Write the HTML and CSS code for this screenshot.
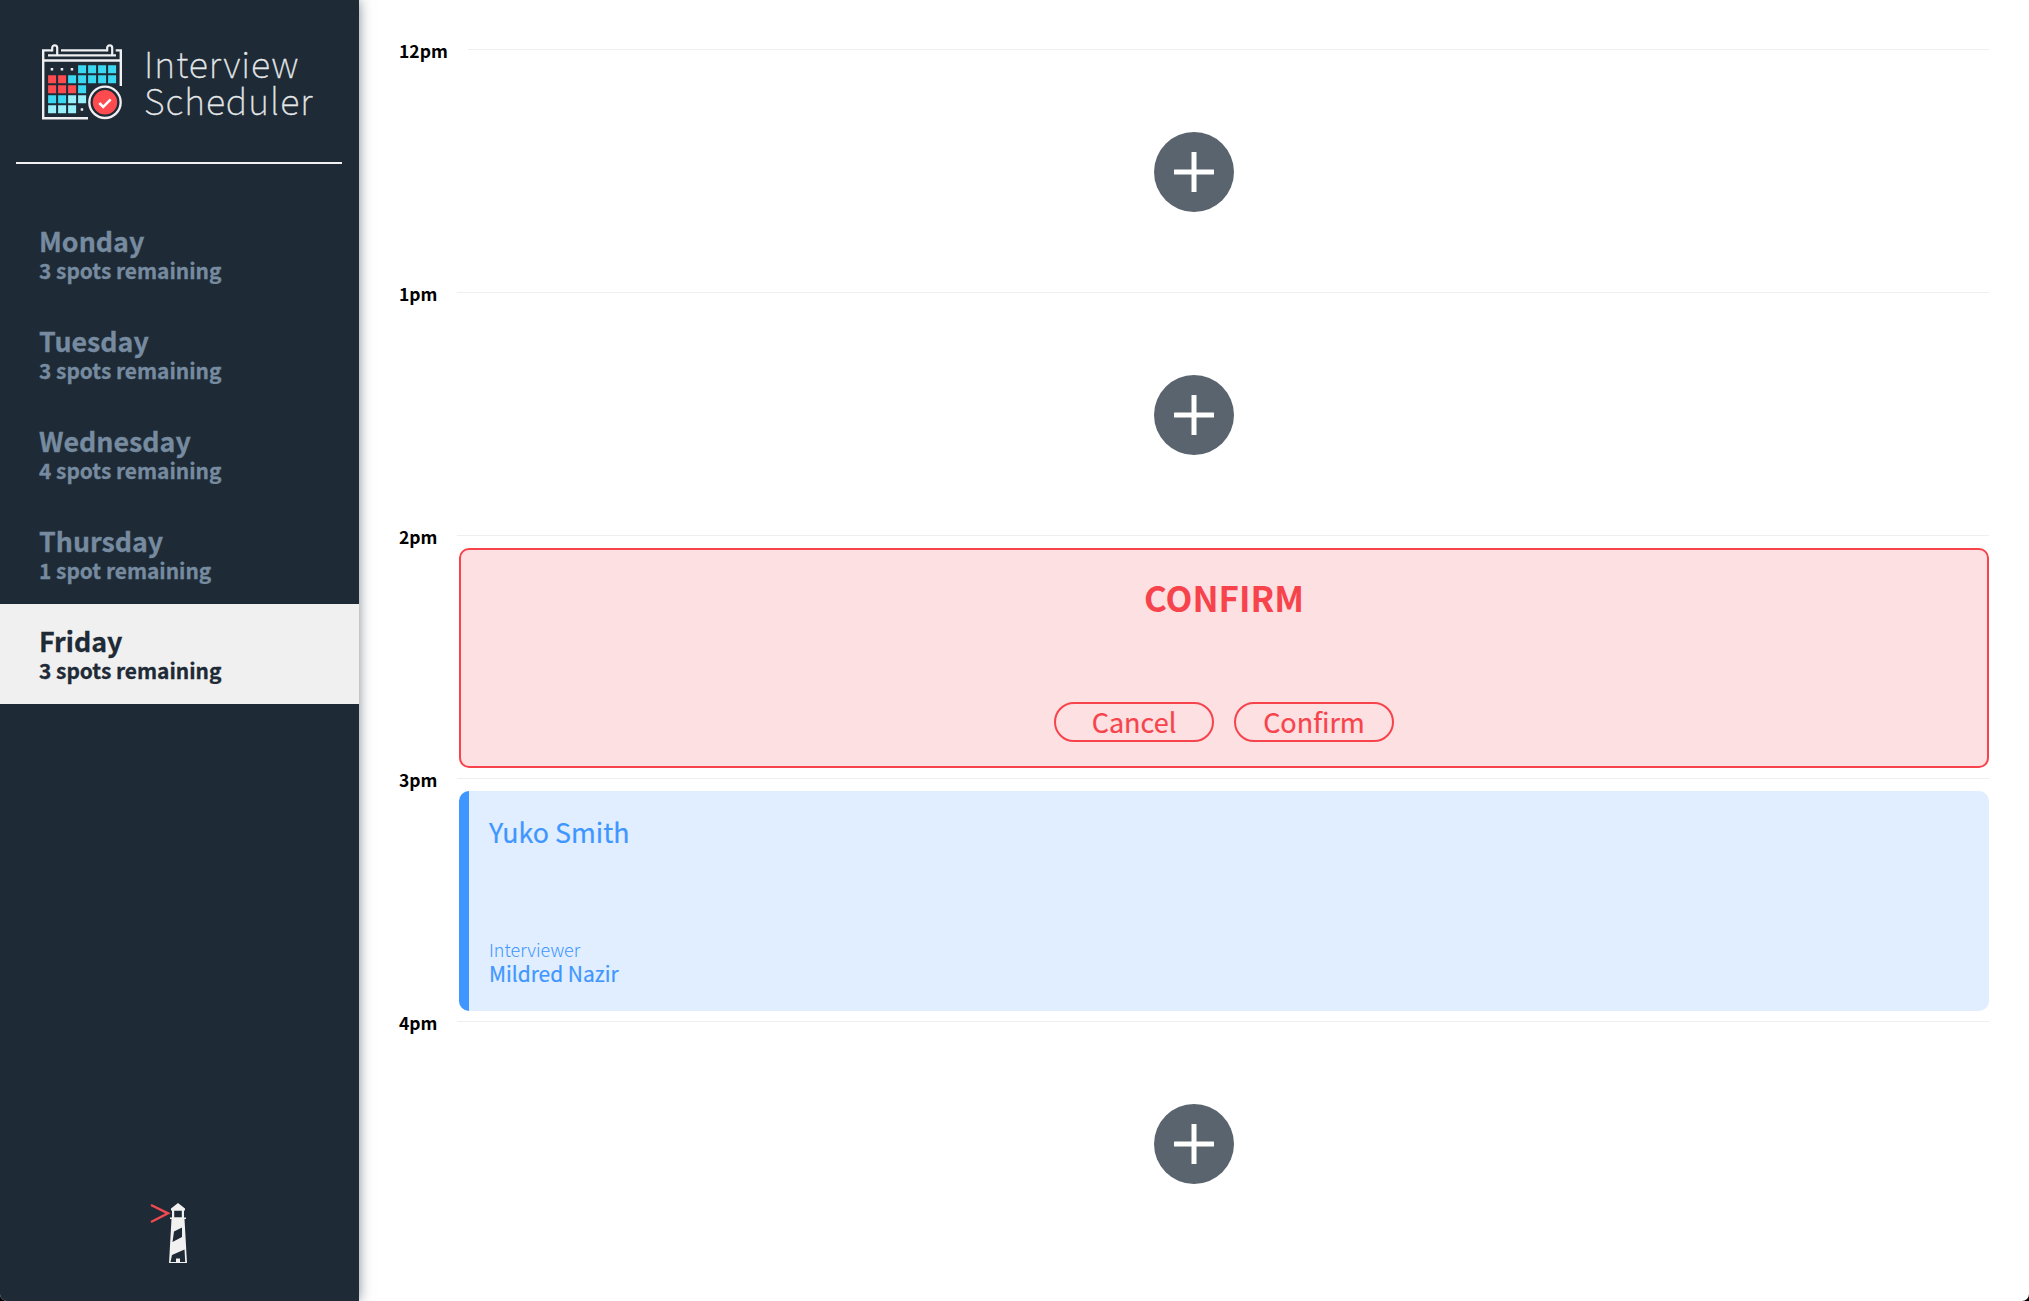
FILE: index.html
```html
<!DOCTYPE html>
<html lang="en">
<head>
<meta charset="utf-8">
<title>Interview Scheduler</title>
<link rel="stylesheet" href="styles.css">
</head>
<body>
<svg width="0" height="0" class="defs" aria-hidden="true">
  <symbol id="add" viewBox="0 0 80 80"><circle cx="40" cy="40" r="40" fill="#5a646e"/><rect x="20" y="37.5" width="40" height="5" rx=".6" fill="#fff"/><rect x="37.5" y="20" width="5" height="40" rx=".6" fill="#fff"/></symbol>
</svg>
<main class="layout">
  <aside class="sidebar">
    <div class="brand">
      <svg class="calendar" viewBox="0 0 82 78" width="82" height="78" aria-hidden="true">
        <g fill="none" stroke="#f0f0f2" stroke-width="2.400">
          <path d="M47 75.300H2.200V7.400h9M20 7.400h45.700M74.700 7.400h5.100V43M7 12.400h68M3 17.500h76" />
          <path stroke-width="2.200" d="M11.200 8.500V4.800a2.500 2.500 0 0 1 5 0V12M66.200 8.500V4.800a2.500 2.500 0 0 1 5 0V12"/>
        </g>
        <path fill="#f0f0f2" d="M9.700 25h2.500v2.500H9.700zM19.700 25h2.500v2.500h-2.500zM29.700 25h2.500v2.500h-2.500zM39.700 65.200h2.500v2.500h-2.500z"/>
        <g transform="translate(.1 .2)">
        <path fill="#3bd8f1" d="M37 22h8v8h-8zM47 22h8v8h-8zM57 22h8v8h-8zM67 22h8v8h-8zM27 32h8v8h-8zM37 32h8v8h-8zM47 32h8v8h-8zM57 32h8v8h-8zM67 32h8v8h-8zM37 42h8v8h-8zM7 52h8v8H7zM17 52h8v8h-8z"/>
        <path fill="#fd4b50" d="M7 32h8v8H7zM17 32h8v8h-8zM7 42h8v8H7zM17 42h8v8h-8zM27 42h8v8h-8z"/>
        <path fill="#98f0fb" d="M27 52h8v8h-8zM37 52h8v8h-8zM7 62h8v8H7zM17 62h8v8h-8zM27 62h8v8h-8z"/>
        </g>
        <circle cx="64" cy="59.300" r="15.700" fill="#1e2a35" stroke="#f0f0f2" stroke-width="2.300"/>
        <circle cx="64" cy="59.300" r="12.200" fill="#fd4b50"/>
        <path d="M58.300 60l3.900 3.900 7.500-7.500" fill="none" stroke="#fff" stroke-width="2.600"/>
      </svg>
      <div class="brand-name"><div>Interview</div><div>Scheduler</div></div>
    </div>
    <hr class="rule">
    <nav class="days">
      <div class="day"><h2>Monday</h2><p>3 spots remaining</p></div>
      <div class="day"><h2>Tuesday</h2><p>3 spots remaining</p></div>
      <div class="day"><h2>Wednesday</h2><p>4 spots remaining</p></div>
      <div class="day"><h2>Thursday</h2><p>1 spot remaining</p></div>
      <div class="day day-selected"><h2>Friday</h2><p>3 spots remaining</p></div>
    </nav>
    <svg class="lighthouse" viewBox="0 0 40 62" width="40" height="62" aria-hidden="true">
      <path d="M2 3l17 8.300L2 20" fill="none" stroke="#ef4a51" stroke-width="2.400"/>
      <path fill="#f1f1f1" d="M29 1l7 5.500v2h-1v7h2v1.500h-1.500L38 61H20l2.500-44H21v-1.500h2v-7h-1v-2z"/>
      <path fill="#1e2a35" d="M25.200 8.700h7.600v6.600h-7.600zM25 29.500l8-4v9.500l-9.500 5zM23 53l12.500-5.500.7 12.500H31v-3.500h-4V60h-5.500z"/>
    </svg>
  </aside>
  <section class="schedule">
    <article class="slot"><header><h4>12pm</h4><hr></header><svg class="add"><use href="#add"/></svg></article>
    <article class="slot"><header><h4>1pm</h4><hr></header><svg class="add"><use href="#add"/></svg></article>
    <article class="slot"><header><h4>2pm</h4><hr></header>
      <div class="card confirm"><h1>CONFIRM</h1><div class="actions"><button>Cancel</button><button>Confirm</button></div></div>
    </article>
    <article class="slot"><header><h4>3pm</h4><hr></header>
      <div class="card booked"><h2>Yuko Smith</h2><div><h4>Interviewer</h4><h3>Mildred Nazir</h3></div></div>
    </article>
    <article class="slot"><header><h4>4pm</h4><hr></header><svg class="add"><use href="#add"/></svg></article>
  </section>
</main>
</body>
</html>
```
FILE: styles.css
```css
* { box-sizing: border-box; margin: 0; padding: 0; }
html { background: #000; }
body { font-family: "Noto Sans CJK SC", sans-serif; color: #000; }
.defs { display: none; }
.layout { display: flex; height: 1301px; overflow: hidden; background: #fff; border-radius: 0 0 7px 7px; }

.sidebar {
  width: 359px; flex: none; display: flex; flex-direction: column; align-items: center;
  background: #1e2a35; box-shadow: 0 0 12px rgba(31, 42, 54, .55); padding-bottom: 37px;
}
.brand { align-self: stretch; height: 162px; display: flex; padding: 43px 0 0 41px; }
.calendar { flex: none; }
.brand-name { margin: 1px 0 0 21px; font-size: 36px; line-height: 36.5px; font-weight: 100; letter-spacing: 1px; color: #e6e8ea; -webkit-text-stroke: .4px #e6e8ea; }
.rule { width: 326px; height: 2px; border: 0; background: #f1f1f1; align-self: flex-start; margin-left: 16px; }
.days { align-self: stretch; margin-top: 40px; }
.day { height: 100px; padding: 22px 0 0 39px; color: #768ba0; -webkit-text-stroke: .3px; }
.day h2 { font-size: 26.800px; line-height: 30px; font-weight: 700; }
.day p { font-size: 20.900px; line-height: 24px; font-weight: 700; margin-top: 2px; }
.day-selected { background: #f0f0f0; color: #1e2a35; }
.lighthouse { margin: auto 0 0 -21px; }

.schedule { flex: 1; padding: 39px 40px 0; }
.slot { height: 243px; display: flex; flex-direction: column; }
.slot header { display: flex; height: 23px; gap: 20px; }
.slot header h4 { font-size: 17.500px; line-height: 22px; font-weight: 700; padding-top: 1px; }
.slot header hr { flex: 1; height: 1px; border: 0; margin-top: 10px; background: #efefef; }
.add { width: 80px; height: 80px; margin: 70px auto 0; }
.card { height: 220px; margin-left: 60px; border-radius: 10px; display: flex; flex-direction: column; justify-content: space-between; }
.confirm { border: 2px solid #f7434c; background: #fce0e2; color: #f7434c; align-items: center; padding: 27px 0 24px; }
.confirm h1 { font-size: 34.900px; line-height: 40px; font-weight: 700; }
.actions { display: flex; gap: 20px; }
.actions button { width: 160px; height: 40px; border: 2px solid #f7434c; border-radius: 20px; background: none; color: #f7434c; font: 400 27px/36px "Noto Sans CJK SC", sans-serif; -webkit-text-stroke: .2px; }
.booked { border-left: 10px solid #4096ff; background: #e0eeff; color: #4096ff; padding: 26px 20px 26px; -webkit-text-stroke: .2px; }
.booked h2 { font-size: 26.800px; line-height: 30px; font-weight: 400; }
.booked h4 { font-size: 17.900px; line-height: 23px; font-weight: 300; -webkit-text-stroke: 0; }
.booked h3 { font-size: 20.950px; line-height: 24px; font-weight: 400; }
```
